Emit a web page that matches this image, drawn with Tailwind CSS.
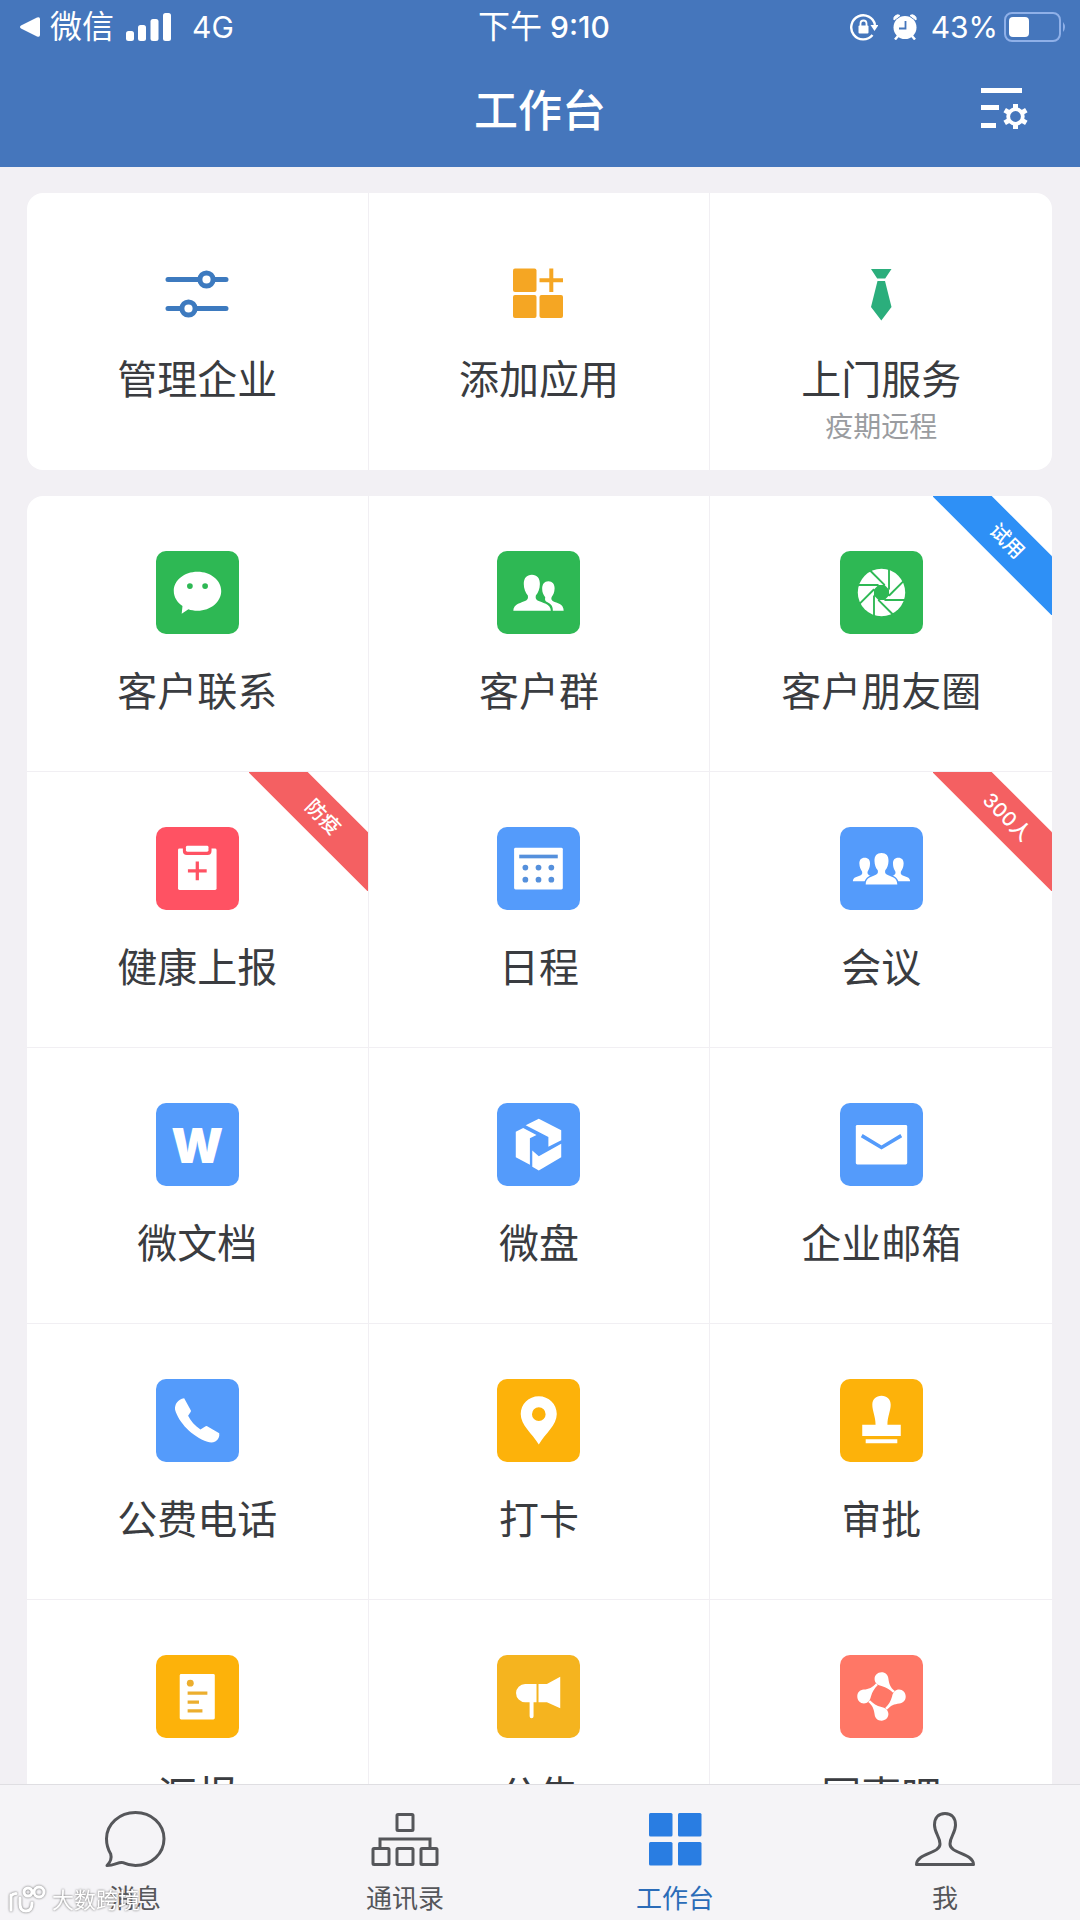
<!DOCTYPE html>
<html lang="zh-CN">
<head>
    <meta charset="UTF-8">
    <meta name="viewport" content="width=device-width, initial-scale=1.0">
    <title>工作台</title>
    <script src="https://cdn.jsdelivr.net/npm/@tailwindcss/browser@4"></script>
</head>
<body class="h-screen flex flex-col overflow-hidden bg-[#f2f0f4] text-[#3a3c40] font-['Inter','Noto_Sans_CJK_SC',sans-serif]">

    <!-- Header -->
    <header class="shrink-0 bg-[#4576bc] text-white">
        <div class="grid grid-cols-3 items-center h-[54px] pl-5 pr-3 text-[30px] leading-none">
            <div class="flex items-center">
                <svg class="w-5 h-5" viewBox="0 0 20 20" fill="currentColor"><path d="M1 8.6 17 .6Q20-.6 20 2v16q0 2.6-3 1.4L1 11.4Q-1 10 1 8.600Z"/></svg>
                <span class="ml-2.5 text-[32px]">微信</span>
                <svg class="ml-3 w-[46px] h-7" viewBox="0 0 46 28" fill="currentColor">
                    <rect x="0" y="18" width="8" height="10" rx="2.500"/>
                    <rect x="12" y="12" width="8" height="16" rx="2.500"/>
                    <rect x="24.500" y="6" width="8" height="22" rx="2.500"/>
                    <rect x="37" y="0" width="8" height="28" rx="2.500"/>
                </svg>
                <span class="ml-5">4G</span>
            </div>
            <div class="flex items-center justify-center gap-2 font-medium"><span class="text-[32px] font-normal">下午</span><span>9:10</span></div>
            <div class="flex items-center justify-end">
                <svg class="w-7 h-7" viewBox="0 0 28 28" fill="none">
                    <path d="M22.500 22A12 12 0 1 1 25 12" stroke="currentColor" stroke-width="2.400"/>
                    <path d="M20.500 12h8l-4 6Z" fill="currentColor"/>
                    <rect x="8.500" y="12.500" width="10" height="8" rx="1" fill="currentColor"/>
                    <path d="M10.500 13v-2.500a3 3 0 0 1 6 0V13" stroke="currentColor" stroke-width="1.800"/>
                </svg>
                <svg class="ml-[15px] w-6 h-[26px]" viewBox="0 0 24 26">
                    <path d="M1 6A4 4 0 0 1 7 1.500ZM23 6A4 4 0 0 0 17 1.500Z" fill="currentColor" stroke="currentColor"/>
                    <path d="m5 22-3 3.500M19 22l3 3.500" stroke="currentColor" stroke-width="2.500"/>
                    <circle cx="12" cy="13.500" r="11.500" fill="currentColor"/>
                    <path d="M12.500 7v7.500H6" fill="none" stroke="#4576bc" stroke-width="1.800"/>
                </svg>
                <span class="ml-3.5">43%</span>
                <svg class="ml-1.5 w-16 h-[30px]" viewBox="0 0 64 30">
                    <rect x="1" y="1" width="55" height="28" rx="7" fill="none" stroke="#8fb0e8" stroke-width="2"/>
                    <rect x="5" y="5" width="20" height="20" rx="4" fill="currentColor"/>
                    <path d="M59 10q4 5 0 10Z" fill="#8fb0e8"/>
                </svg>
            </div>
        </div>
        <div class="grid grid-cols-3 items-center h-[113px] px-12">
            <h1 class="col-start-2 text-center text-[44px] leading-none font-medium">工作台</h1>
            <button type="button" aria-label="设置" class="justify-self-end mr-1 pb-1.5">
                <svg class="w-12 h-11" viewBox="0 0 48 44" fill="none" stroke="currentColor">
                    <path d="M1 4.500h41M1 21.500h18M1 39.500h15" stroke-width="5"/>
                    <circle cx="35.500" cy="30.500" r="7.300" stroke-width="3.800"/>
                    <path d="M35.500 18v5M35.500 38v5M46.300 24.200l-4.300 2.500M29 34.300l-4.300 2.500M46.300 36.800 42 34.300M29 26.700l-4.300-2.500" stroke-width="5"/>
                </svg>
            </button>
        </div>
    </header>

    <main class="flex-1 min-h-0 overflow-hidden pl-[27px] pr-7 pt-[26px]">
        <!-- Shortcuts -->
        <section class="grid grid-cols-3 h-[277px] rounded-2xl bg-white divide-x divide-[#f1eff3]">
            <a href="#" class="flex flex-col items-center pt-[59px]">
                <svg class="w-[84px] h-[84px]" viewBox="0 0 84 84" fill="none" stroke="#3d7abf" stroke-width="5" stroke-linecap="round">
                    <path d="M13 27.500h58M13 56.500h58"/>
                    <circle cx="51.500" cy="27.500" r="6.600" fill="#fff"/>
                    <circle cx="33.500" cy="56.500" r="6.600" fill="#fff"/>
                </svg>
                <span class="mt-4 text-[40px] leading-[56px]">管理企业</span>
            </a>
            <a href="#" class="flex flex-col items-center pt-[59px]">
                <svg class="w-[84px] h-[84px]" viewBox="0 0 84 84" fill="#f5a623">
                    <rect x="16" y="16.500" width="23.500" height="23.500" rx="2"/>
                    <rect x="16" y="43" width="23.500" height="23" rx="2"/>
                    <rect x="42.500" y="43" width="23.500" height="23" rx="2"/>
                    <path d="M52.300 16.500h4v9.700H66v4h-9.700V40h-4v-9.800h-9.800v-4h9.800Z"/>
                </svg>
                <span class="mt-4 text-[40px] leading-[56px]">添加应用</span>
            </a>
            <a href="#" class="flex flex-col items-center pt-[59px]">
                <svg class="w-[84px] h-[84px]" viewBox="0 0 84 84" fill="#2bae7c">
                    <path d="M32 17h20.500l-6.300 9.500h-8ZM38.500 29h7.500l6.500 26L42.300 68.500 32 55Z"/>
                </svg>
                <span class="mt-4 text-[40px] leading-[56px]">上门服务</span>
                <span class="text-[28px] leading-[38px] text-[#9a9ca0]">疫期远程</span>
            </a>
        </section>

        <!-- Apps -->
        <section class="mt-[26px] grid grid-cols-3 auto-rows-[276px] rounded-t-2xl bg-white overflow-hidden">
            <a href="#" class="flex flex-col items-center pt-[55px] border-r border-b border-[#f1eff3]">
                <svg class="w-[83px] h-[83px] rounded-[10px] bg-[#2eb854]" viewBox="0 0 84 84" fill="#fff">
                    <path d="M42 21c13.500 0 24 8.700 24 19.500S55.500 60.500 42 60.500c-3.500 0-6.500-.5-9.200-1.500L26 63.500l.8-7.800C21.300 52 18 46.500 18 40.500 18 29.700 28.500 21 42 21Z"/>
                    <circle cx="34.300" cy="35.500" r="2.900" fill="#2eb854"/><circle cx="49.700" cy="35.500" r="2.900" fill="#2eb854"/>
                </svg>
                <span class="mt-[30px] text-[40px] leading-[56px]">客户联系</span>
            </a>
            <a href="#" class="flex flex-col items-center pt-[55px] border-r border-b border-[#f1eff3]">
                <svg class="w-[83px] h-[83px] rounded-[10px] bg-[#2eb854]" viewBox="0 0 84 84" fill="#fff">
                    <path d="M52 30.500c4 0 6.500 3 6.300 7.500-.2 4-1.300 6.500-3 8.500-.8 2 0 3.500 1.500 4.300C60.500 53 67.500 53 67.500 60.500H56.500c.3-6-3-7.500-6.800-9.500-1.500-1-1-3-.9-4.200-2-2.600-3.100-4.800-3.100-8.800 0-4.500 2.300-7.500 6.300-7.500Z"/>
                    <path d="M35.300 24c5.300 0 8.200 3.500 8.100 9.500-.1 5-1.700 9-4.100 11.500-.5 2.500 0 4 1.700 5 4.500 2.500 13.500 3 13.500 10.500h-38c0-7.500 8.500-8 13-10.500 1.700-1 2.200-2.500 1.700-5-2.400-2.500-4-6.500-4.100-11.500C27 27.500 30 24 35.300 24Z" stroke="#2eb854" stroke-width="2" paint-order="stroke"/>
                </svg>
                <span class="mt-[30px] text-[40px] leading-[56px]">客户群</span>
            </a>
            <a href="#" class="relative flex flex-col items-center pt-[55px] border-b border-[#f1eff3]">
                <svg class="w-[83px] h-[83px] rounded-[10px] bg-[#2eb854]" viewBox="0 0 84 84">
                    <circle cx="42" cy="42" r="24" fill="#fff"/>
                    <path d="M49.600 38.900v6.200L45.100 49.600h-6.200L34.400 45.100v-6.200l4.500-4.500h6.200Z" fill="#2eb854"/>
                    <g stroke="#2eb854" stroke-width="1.900">
                        <path id="blade" d="M49.600 17v22"/>
                        <use href="#blade" transform="rotate(45 42 42)"/>
                        <use href="#blade" transform="rotate(90 42 42)"/>
                        <use href="#blade" transform="rotate(135 42 42)"/>
                        <use href="#blade" transform="rotate(180 42 42)"/>
                        <use href="#blade" transform="rotate(225 42 42)"/>
                        <use href="#blade" transform="rotate(270 42 42)"/>
                        <use href="#blade" transform="rotate(315 42 42)"/>
                    </g>
                </svg>
                <span class="mt-[30px] text-[40px] leading-[56px]">客户朋友圈</span>
                <div class="absolute top-0 right-0 w-[119px] h-[119px] overflow-hidden">
                    <div class="absolute top-6 -left-4 w-[180px] h-[42px] rotate-45 bg-[#2e90f6] text-white text-center text-[20px] leading-[42px] font-medium">试用</div>
                </div>
            </a>

            <a href="#" class="relative flex flex-col items-center pt-[55px] border-r border-b border-[#f1eff3]">
                <svg class="w-[83px] h-[83px] rounded-[10px] bg-[#ff5263]" viewBox="0 0 84 84">
                    <rect x="22.300" y="21.700" width="39" height="42" rx="1.500" fill="#fff"/>
                    <rect x="27.200" y="15" width="29" height="13.300" rx="4" fill="#ff5263"/>
                    <rect x="30.300" y="19" width="22.800" height="6" rx="1.500" fill="#fff"/>
                    <path d="M41.800 35v19M32.300 44.500h19" stroke="#ff5263" stroke-width="3.300"/>
                </svg>
                <span class="mt-[30px] text-[40px] leading-[56px]">健康上报</span>
                <div class="absolute top-0 right-0 w-[119px] h-[119px] overflow-hidden">
                    <div class="absolute top-6 -left-4 w-[180px] h-[42px] rotate-45 bg-[#f46062] text-white text-center text-[20px] leading-[42px] font-medium">防疫</div>
                </div>
            </a>
            <a href="#" class="flex flex-col items-center pt-[55px] border-r border-b border-[#f1eff3]">
                <svg class="w-[83px] h-[83px] rounded-[10px] bg-[#549bfb]" viewBox="0 0 84 84" fill="#5590dc">
                    <rect x="17.300" y="21" width="49.300" height="42.300" rx="1.500" fill="#fff"/>
                    <rect x="22.500" y="28" width="39" height="3.700"/>
                    <circle cx="28.700" cy="41" r="2.900"/><circle cx="42" cy="41" r="2.900"/><circle cx="55" cy="41" r="2.900"/>
                    <circle cx="28.700" cy="53.300" r="2.900"/><circle cx="42" cy="53.300" r="2.900"/><circle cx="55" cy="53.300" r="2.900"/>
                </svg>
                <span class="mt-[30px] text-[40px] leading-[56px]">日程</span>
            </a>
            <a href="#" class="relative flex flex-col items-center pt-[55px] border-b border-[#f1eff3]">
                <svg class="w-[83px] h-[83px] rounded-[10px] bg-[#549bfb]" viewBox="0 0 84 84" fill="#fff">
                    <path id="side" d="M25 31c3.700 0 5.500 2.300 5.400 6-.1 3.500-1 6-2.400 8-.6 2 .2 3 1.500 3.800 3 1.500 6 2.200 6 6.200H13c0-4.500 5-4.700 8-6.200 1.500-.8 1.800-2 1.300-3.800-1.500-2-2.600-4.500-2.700-8C19.500 33.300 21.300 31 25 31Z"/>
                    <use href="#side" transform="matrix(-1 0 0 1 84 0)"/>
                    <path d="M42 26.300c4.800 0 7.200 3 7.100 8-.1 4-1.300 7-3.300 9.500-.5 2.500 0 3.500 1.500 4.300 4 2.200 10.700 2.500 10.700 10H26c0-7.500 7-7.800 10.700-10 1.500-.8 2-1.800 1.500-4.300-2-2.500-3.200-5.500-3.300-9.500-.1-5 2.300-8 7.100-8Z" stroke="#549bfb" stroke-width="3" paint-order="stroke"/>
                </svg>
                <span class="mt-[30px] text-[40px] leading-[56px]">会议</span>
                <div class="absolute top-0 right-0 w-[119px] h-[119px] overflow-hidden">
                    <div class="absolute top-6 -left-4 w-[180px] h-[42px] rotate-45 bg-[#f46062] text-white text-center text-[20px] leading-[42px] font-medium">300人</div>
                </div>
            </a>

            <a href="#" class="flex flex-col items-center pt-[55px] border-r border-b border-[#f1eff3]">
                <span class="w-[83px] h-[83px] rounded-[10px] bg-[#549bfb] text-white text-center text-[48px] leading-[86px] font-black">W</span>
                <span class="mt-[30px] text-[40px] leading-[56px]">微文档</span>
            </a>
            <a href="#" class="flex flex-col items-center pt-[55px] border-r border-b border-[#f1eff3]">
                <svg class="w-[83px] h-[83px] rounded-[10px] bg-[#549bfb]" viewBox="0 0 84 84" fill="#fff">
                    <path d="M29 22.500 42.300 16 65 27.500v10.200l-13 6.600V34.500ZM26.500 25.300 40 32.300l-6.700 3.400v26.800L19 55V29ZM35.700 48l6.600 5.800L65 41.300V55L42.300 68.300l-6.600-3.800Z"/>
                </svg>
                <span class="mt-[30px] text-[40px] leading-[56px]">微盘</span>
            </a>
            <a href="#" class="flex flex-col items-center pt-[55px] border-b border-[#f1eff3]">
                <svg class="w-[83px] h-[83px] rounded-[10px] bg-[#549bfb]" viewBox="0 0 84 84">
                    <rect x="16" y="22.300" width="52" height="40" rx="1.500" fill="#fff"/>
                    <path d="M22 33 42 45l20-12" fill="none" stroke="#549bfb" stroke-width="3.600"/>
                </svg>
                <span class="mt-[30px] text-[40px] leading-[56px]">企业邮箱</span>
            </a>

            <a href="#" class="flex flex-col items-center pt-[55px] border-r border-b border-[#f1eff3]">
                <svg class="w-[83px] h-[83px] rounded-[10px] bg-[#549bfb]" viewBox="0 0 84 84" fill="#fff">
                    <path d="M28.500 19.500 35.300 32q.3.800-.3 1.500l-2.500 3.800C35 42.500 39.500 47.500 45 51l4.800-3q1-.6 2-.1L64 55c.6 3.500-1 6.500-4 8.300-2.500 1.200-5 1.200-8 .2C36.500 58 23 44 19.300 31c-.7-5 2.700-10.500 9.200-11.500Z"/>
                </svg>
                <span class="mt-[30px] text-[40px] leading-[56px]">公费电话</span>
            </a>
            <a href="#" class="flex flex-col items-center pt-[55px] border-r border-b border-[#f1eff3]">
                <svg class="w-[83px] h-[83px] rounded-[10px] bg-[#fdb20a]" viewBox="0 0 84 84" fill="#fff" fill-rule="evenodd">
                    <path d="M42.300 17.500c10.200 0 18.200 8 18.200 18C60.500 47 49 55 42.300 66.300 35.500 55 24 47 24 35.500c0-10 8-18 18.300-18Zm0 11.200a6.900 6.900 0 1 0 0 13.800 6.900 6.900 0 0 0 0-13.800Z"/>
                </svg>
                <span class="mt-[30px] text-[40px] leading-[56px]">打卡</span>
            </a>
            <a href="#" class="flex flex-col items-center pt-[55px] border-b border-[#f1eff3]">
                <svg class="w-[83px] h-[83px] rounded-[10px] bg-[#fdb20a]" viewBox="0 0 84 84" fill="#fff">
                    <path d="M42 17c5.500 0 9.300 3.800 9.300 9 0 6-3.300 12-3.300 20.300h13.500v11.500h-39V46.300H36C36 38 32.700 32 32.700 26c0-5.200 3.800-9 9.300-9ZM26 61h32v4H26Z"/>
                </svg>
                <span class="mt-[30px] text-[40px] leading-[56px]">审批</span>
            </a>

            <a href="#" class="flex flex-col items-center pt-[55px] border-r border-[#f1eff3]">
                <svg class="w-[83px] h-[83px] rounded-[10px] bg-[#fdb20a]" viewBox="0 0 84 84">
                    <rect x="24" y="19.300" width="35.500" height="46" rx="1.500" fill="#fff"/>
                    <circle cx="34.700" cy="28.500" r="3.500" fill="#ecae2e"/>
                    <path d="M32 38.700h20M32 47.700h11.500M32 56.500h15" stroke="#ecae2e" stroke-width="3.300"/>
                </svg>
                <span class="mt-[30px] text-[40px] leading-[56px]">汇报</span>
            </a>
            <a href="#" class="flex flex-col items-center pt-[55px] border-r border-[#f1eff3]">
                <svg class="w-[83px] h-[83px] rounded-[10px] bg-[#f5b41f]" viewBox="0 0 84 84" fill="#fff">
                    <path d="M40 29.300v18.500h-3V62a2 2 0 0 1-4 0V47.800h-4.500a9.200 9.200 0 0 1 0-18.500ZM42 29.300h8.500L64 22v32l-13.500-6.200H42Z"/>
                </svg>
                <span class="mt-[30px] text-[40px] leading-[56px]">公告</span>
            </a>
            <a href="#" class="flex flex-col items-center pt-[55px]">
                <svg class="w-[83px] h-[83px] rounded-[10px] bg-[#ff7766]" viewBox="0 0 84 84" fill="#fff">
                    <path id="drop" d="M42 17.500c4 0 6.500 2.500 7 6.500.6 5 2 9 6.500 12.500l-1.800 1.800c-3.500-3.500-6.500-5.500-11.700-7-4.500-.9-7-3.700-7-7.100 0-3.700 3-6.700 7-6.700Z"/>
                    <use href="#drop" transform="rotate(90 42 42)"/>
                    <use href="#drop" transform="rotate(180 42 42)"/>
                    <use href="#drop" transform="rotate(270 42 42)"/>
                </svg>
                <span class="mt-[30px] text-[40px] leading-[56px]">同事吧</span>
            </a>
        </section>
    </main>

    <!-- Tab bar -->
    <nav class="relative shrink-0 grid grid-cols-4 h-[136px] border-t border-[#dfdee2] bg-[#f5f4f7] text-[26px] leading-8 text-[#55565a]">
        <a href="#" class="flex flex-col items-center pt-6">
            <svg class="w-[72px] h-[60px]" viewBox="0 0 72 60" fill="none" stroke="currentColor" stroke-width="3" stroke-linejoin="round">
                <path d="M36.500 3.500c16 0 28.500 11.500 28.500 26.300S52.500 56.500 36.500 56.500c-5 0-8.500-1-12.500-2.800-4-1.500-8 2.800-16 2.800 3.500-3.500 5-7 3.700-11.500C9 40.500 7.500 35.500 7.500 29.800 7.500 15 20.500 3.500 36.500 3.500Z"/>
            </svg>
            <span class="mt-3.5">消息</span>
        </a>
        <a href="#" class="flex flex-col items-center pt-6">
            <svg class="w-[72px] h-[60px]" viewBox="0 0 72 60" fill="none" stroke="currentColor" stroke-width="3">
                <rect x="28" y="5.500" width="16" height="16" rx="1"/>
                <rect x="4" y="39.500" width="16" height="16" rx="1"/>
                <rect x="28" y="39.500" width="16" height="16" rx="1"/>
                <rect x="52" y="39.500" width="16" height="16" rx="1"/>
                <path d="M11 39v-9h50v9"/>
            </svg>
            <span class="mt-3.5">通讯录</span>
        </a>
        <a href="#" aria-current="page" class="flex flex-col items-center pt-6 text-[#2b6cb8]">
            <svg class="w-[72px] h-[60px]" viewBox="0 0 72 60" fill="#297de2">
                <rect x="10" y="4" width="23.500" height="23.500" rx="1.500"/>
                <rect x="39" y="4" width="23.500" height="23.500" rx="1.500"/>
                <rect x="10" y="33" width="23.500" height="23.500" rx="1.500"/>
                <rect x="39" y="33" width="23.500" height="23.500" rx="1.500"/>
            </svg>
            <span class="mt-3.5">工作台</span>
        </a>
        <a href="#" class="flex flex-col items-center pt-6">
            <svg class="w-[72px] h-[60px]" viewBox="0 0 72 60" fill="none" stroke="currentColor" stroke-width="3" stroke-linejoin="round">
                <path d="M36 4.500c7 0 10.500 4.500 10.500 11.500 0 8-5.500 11.500-5.500 19 0 10 23.500 9 23.500 20.500h-57C7.500 44 31 45 31 35c0-7.500-5.500-11-5.500-19C25.500 9 29 4.500 36 4.500Z"/>
            </svg>
            <span class="mt-3.5">我</span>
        </a>

        <!-- Watermark -->
        <div class="absolute left-2 bottom-1 flex items-center text-[22px] text-white drop-shadow-[0_0_1px_#666]">
            <svg class="w-10 h-8 mr-1" viewBox="0 0 40 32" fill="none" stroke="currentColor" stroke-width="3" stroke-linecap="round">
                <path d="M3 11v15M3 12q2-2.500 5-2.500M12 14v6q0 7 6 7t6-8"/>
                <circle cx="20" cy="8" r="4"/><circle cx="31" cy="8" r="5"/>
            </svg>
            <span>大数跨境</span>
        </div>
    </nav>
</body>
</html>
